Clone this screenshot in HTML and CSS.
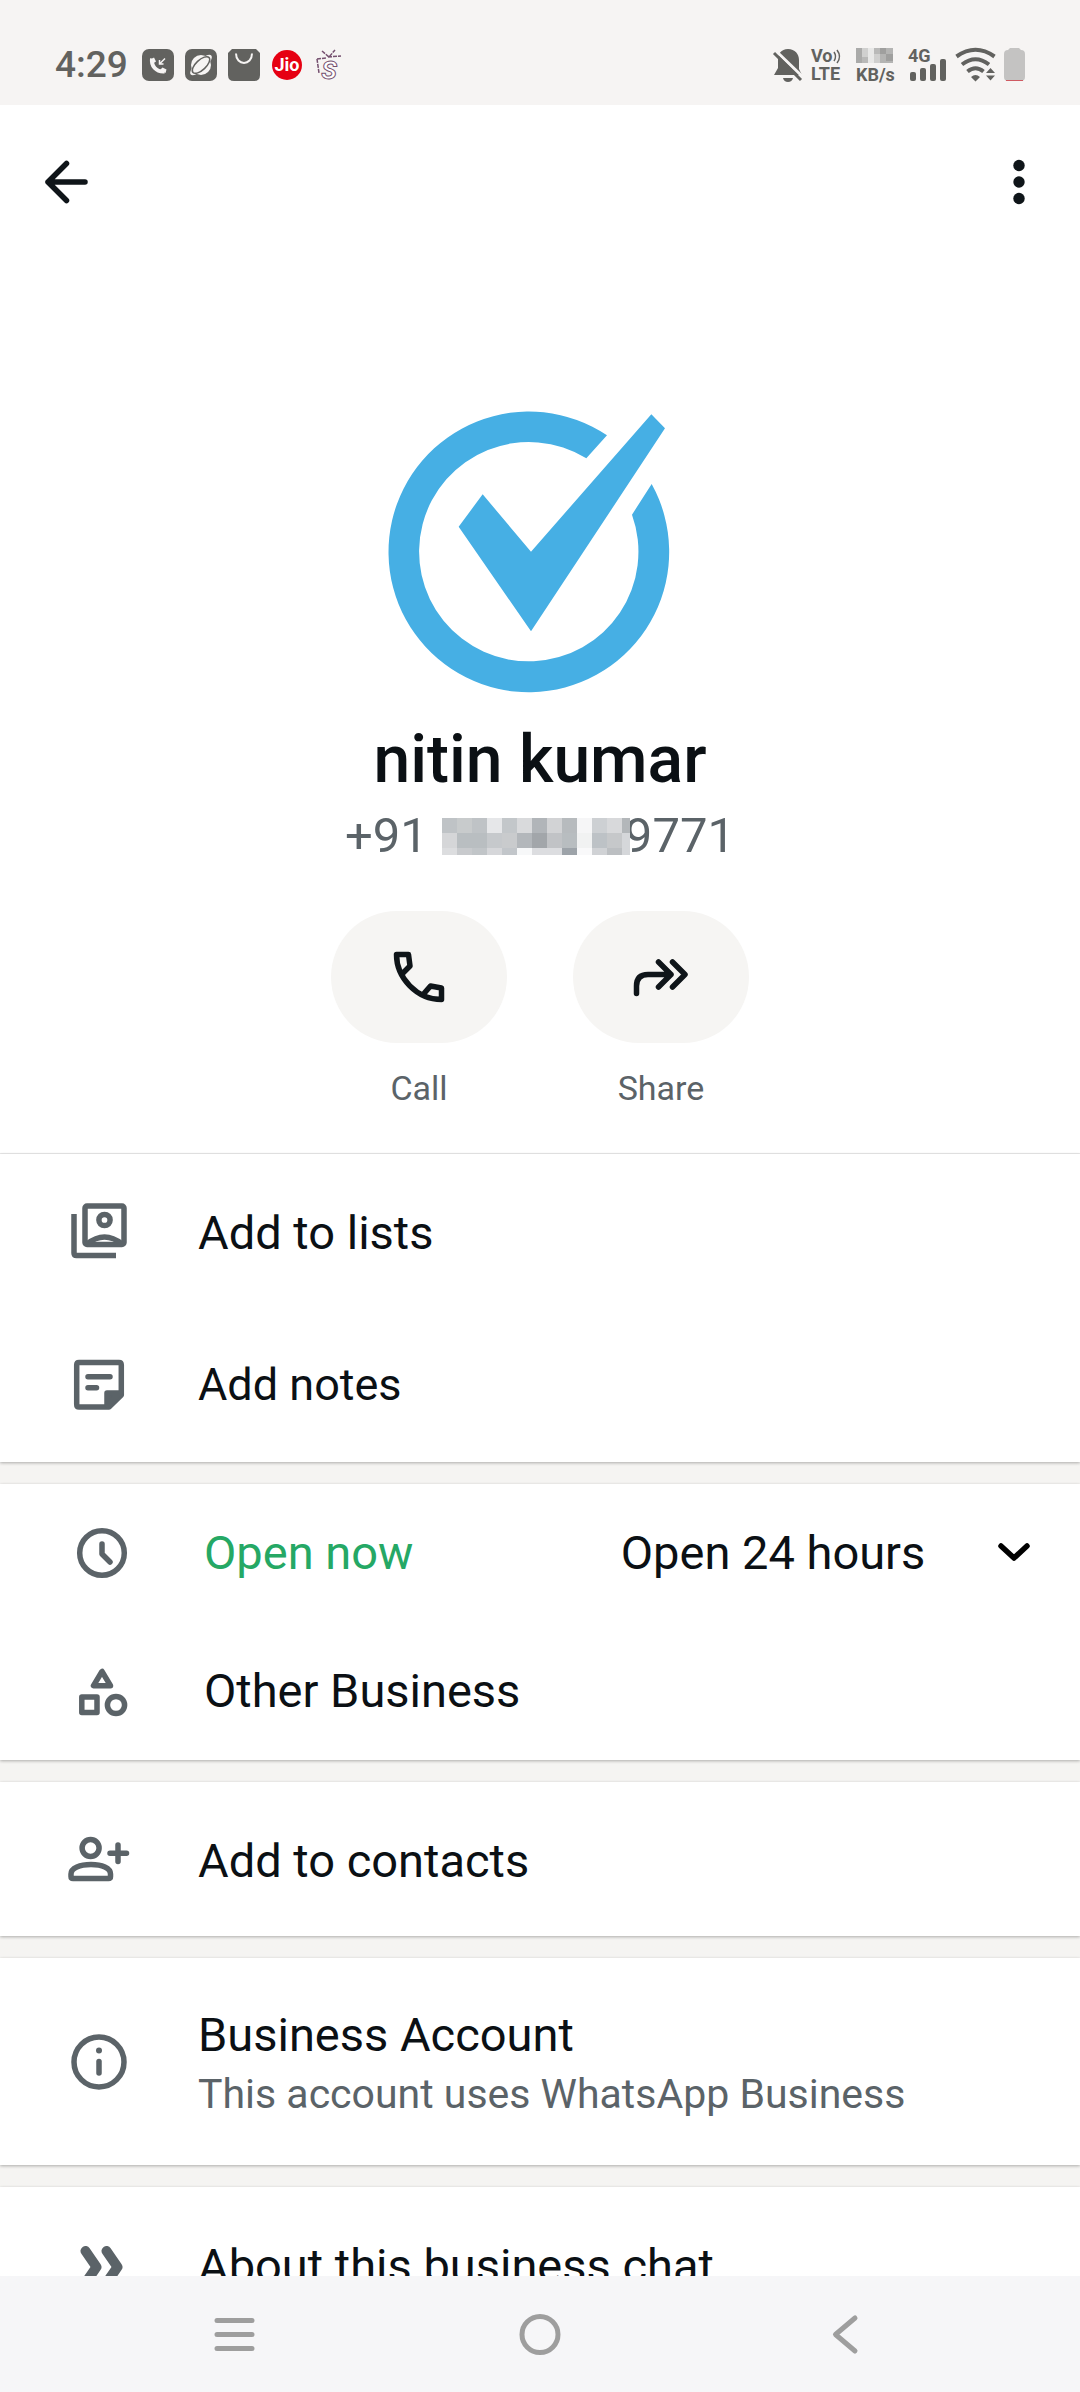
FILE: index.html
```html
<!DOCTYPE html>
<html lang="en">
<head>
  <meta charset="UTF-8">
  <meta name="viewport" content="width=device-width, initial-scale=1.0">
  <link rel="stylesheet" href="styles.css">
  <title>nitin kumar</title>
</head>
<body>
  <div class="status-bar">
    <div class="status-left">
      <span class="time">4:29</span>
      <svg width="32" height="32" viewBox="0 0 32 32">
        <rect width="32" height="32" rx="7" fill="#62625f"/>
        <path d="M10 9.500C9 17 14 23 22.500 22.500" fill="none" stroke="#f6f4f3" stroke-width="4"/>
        <path d="M8 11l4-2.500 2 4-3 2zM18 21l2.500-2.500 4 2-1 3.500z" fill="#f6f4f3"/>
        <path d="M23 9.500L17.500 15M17.500 11V15H21.500" fill="none" stroke="#f6f4f3" stroke-width="1.500"/>
      </svg>
      <svg width="32" height="32" viewBox="0 0 32 32">
        <rect width="32" height="32" rx="7" fill="#62625f"/>
        <circle cx="16" cy="16" r="10" fill="#f6f4f3"/>
        <ellipse cx="16" cy="16" rx="14" ry="5" transform="rotate(-43 16 16)" fill="#f6f4f3"/>
        <ellipse cx="16" cy="16" rx="11" ry="5" transform="rotate(-43 16 16)" fill="#f6f4f3" stroke="#62625f" stroke-width="1.500"/>
      </svg>
      <svg width="32" height="32" viewBox="0 0 32 32">
        <path d="M4 0H28L32 4V26Q32 32 26 32H6Q0 32 0 26V4Z" fill="#62625f"/>
        <path d="M8 4.500C8 17 24 17 24 4.500" fill="none" stroke="#f6f4f3" stroke-width="2"/>
      </svg>
      <svg width="32" height="32" viewBox="0 0 32 32">
        <circle cx="16" cy="16" r="15" fill="#e60012"/>
        <text x="16" y="22" class="jio">Jio</text>
      </svg>
      <svg width="32" height="32" viewBox="0 0 32 32">
        <path d="M8 2L15 8L21 1M14 8L27 7M3 10L12 9M3 10L5 24" fill="none" stroke="#75506f" stroke-width="1.500" stroke-dasharray="4 1"/>
        <text x="15" y="30" class="tv">S</text>
      </svg>
    </div>
    <div class="status-right">
      <svg width="30" height="36" viewBox="0 0 30 36">
        <path d="M15 2C8 2 5 7 5 13V21L1 28H29L26 22V13C26 7 22 2 15 2Z" fill="#62625f"/>
        <path d="M10 31H20Q19 35 15 35T10 31Z" fill="#62625f"/>
        <path d="M3 4L31 31" stroke="#f6f4f3" stroke-width="3"/>
        <path d="M1 6L28 33" stroke="#62625f" stroke-width="3"/>
      </svg>
      <svg width="30" height="36" viewBox="0 0 30 36">
        <text x="0" y="15" class="tiny">Vo</text>
        <path d="M23 5Q26 9.500 23 14M26 3Q31 9.500 26 16" fill="none" stroke="#62625f" stroke-width="1.500"/>
        <text x="0" y="33" class="tiny">LTE</text>
      </svg>
      <svg class="speed" width="37" height="36" viewBox="0 0 37 36">
        <g shape-rendering="crispEdges">
          <path fill="#aaaaa9" d="M0 1h6v6h-6zM0 7h6v9h-6z"/>
          <path fill="#d0d0cf" d="M6 1h6v9h-6z"/>
          <path fill="#b9b9b8" d="M6 10h6v6h-6zM18 1h6v6h-6z"/>
          <path fill="#e8e8e7" d="M12 1h6v15h-6z"/>
          <path fill="#cfcfce" d="M18 7h6v9h-6z"/>
          <path fill="#9f9f9e" d="M24 1h6v6h-6zM30 7h7v7h-7z"/>
          <path fill="#b4b4b3" d="M24 7h6v9h-6zM30 1h7v6h-7zM30 14h7v2h-7z"/>
        </g>
        <text x="0" y="34" class="tiny">KB/s</text>
      </svg>
      <svg width="39" height="36" viewBox="0 0 39 36">
        <text x="0" y="15" class="tiny">4G</text>
        <g fill="#62625f">
          <rect x="2" y="25" width="6" height="9" rx="2"/>
          <rect x="12" y="21" width="6" height="13" rx="2"/>
          <rect x="22" y="17" width="6" height="17" rx="2"/>
          <rect x="32" y="12" width="6" height="22" rx="2"/>
        </g>
      </svg>
      <svg width="41" height="36" viewBox="0 0 41 36">
        <path d="M1.500 9.500Q20.500 -4 39.500 9.500M7 17.500Q20.500 7 34 17.500M12.500 24.500Q20.500 18 28.500 24.500" fill="none" stroke="#62625f" stroke-width="4"/>
        <path d="M16 30Q20.500 26 25 30L20.500 34.500ZM31 26L35.500 21L40 26ZM31 28.500H40L35.500 33.500Z" fill="#62625f"/>
      </svg>
      <svg width="21" height="36" viewBox="0 0 21 36">
        <path d="M4 3L6 1H15L17 3Q21 3 21 7V30Q21 34 17 34H4Q0 34 0 30V7Q0 3 4 3Z" fill="#c4c3c2"/>
        <path d="M2 33.500H19" stroke="#cf5a62" stroke-width="1"/>
      </svg>
    </div>
  </div>

  <main>
    <header class="app-bar">
      <button class="icon-btn" aria-label="Back">
        <svg class="stroke dark" viewBox="0 0 72 72"><path d="M55 36H18M36.500 17.500L18 36L36.500 54.500"/></svg>
      </button>
      <button class="icon-btn" aria-label="More options">
        <svg viewBox="0 0 72 72" fill="#0f1519"><circle cx="36" cy="19.500" r="5.700"/><circle cx="36" cy="36" r="5.700"/><circle cx="36" cy="52.500" r="5.700"/></svg>
      </button>
    </header>

    <section class="profile">
      <svg class="photo" viewBox="0 0 1020 960" fill="#46afe4">
        <path d="M711 136A421 421 0 1 0 845 282L786 374A329 329 0 1 1 649 205Z"/>
        <path d="M338 313L483 485L844 73L885 115L483 724L266 410Z"/>
      </svg>
      <h1>nitin kumar</h1>
      <p class="phone">
        <span>+91</span>
        <svg class="blur-strip" width="188" height="37" viewBox="0 0 188 37" shape-rendering="crispEdges">
          <rect x="0" y="0" width="15" height="15" fill="#bfc3c6"/><rect x="15" y="0" width="15" height="15" fill="#c8cbcc"/><rect x="30" y="0" width="15" height="15" fill="#bfc3c6"/><rect x="45" y="0" width="15" height="15" fill="#e6e7e9"/><rect x="60" y="0" width="15" height="15" fill="#c3c7ca"/><rect x="75" y="0" width="15" height="15" fill="#d9dadc"/><rect x="90" y="0" width="15" height="15" fill="#b1b5b9"/><rect x="105" y="0" width="15" height="15" fill="#d2d3d5"/><rect x="120" y="0" width="15" height="15" fill="#b7bbbe"/><rect x="135" y="0" width="15" height="15" fill="#f6f6f7"/><rect x="150" y="0" width="15" height="15" fill="#cdd0d3"/><rect x="165" y="0" width="15" height="15" fill="#d8d9db"/><rect x="180" y="0" width="8" height="15" fill="#b3b7ba"/>
          <rect x="0" y="15" width="15" height="15" fill="#d5d6d8"/><rect x="15" y="15" width="30" height="15" fill="#b9bec1"/><rect x="45" y="15" width="15" height="15" fill="#c6c9cc"/><rect x="60" y="15" width="15" height="15" fill="#c9cbcd"/><rect x="75" y="15" width="15" height="15" fill="#b3b7bb"/><rect x="90" y="15" width="15" height="15" fill="#a2a6aa"/><rect x="105" y="15" width="15" height="15" fill="#c1c3c6"/><rect x="120" y="15" width="15" height="15" fill="#b8bdc0"/><rect x="135" y="15" width="15" height="15" fill="#f1f2f2"/><rect x="150" y="15" width="15" height="15" fill="#bdc2c6"/><rect x="165" y="15" width="15" height="15" fill="#c6c8ca"/><rect x="180" y="15" width="8" height="15" fill="#d5d7da"/>
          <rect x="0" y="30" width="15" height="7" fill="#dcdddf"/><rect x="15" y="30" width="15" height="7" fill="#c8cacd"/><rect x="30" y="30" width="15" height="7" fill="#c1c5c8"/><rect x="45" y="30" width="15" height="7" fill="#d6d7da"/><rect x="60" y="30" width="15" height="7" fill="#c2c6ca"/><rect x="75" y="30" width="15" height="7" fill="#f7f8f9"/><rect x="90" y="30" width="30" height="7" fill="#dcdde0"/><rect x="120" y="30" width="15" height="7" fill="#9da3a9"/><rect x="135" y="30" width="15" height="7" fill="#f9f9fa"/><rect x="150" y="30" width="15" height="7" fill="#d0d2d5"/><rect x="165" y="30" width="15" height="7" fill="#bcbfc2"/><rect x="180" y="30" width="8" height="7" fill="#d5d7da"/>
        </svg>
        <span>9771</span>
      </p>
      <div class="actions">
        <button class="action">
          <span class="pill">
            <svg class="stroke dark" viewBox="0 0 72 72"><path d="M13.500 13.500H25.500L27 25L20 32M13.500 13.500C13.500 37 34 58.500 58.500 58.500V47L47.500 45L41 52.500"/></svg>
          </span>
          Call
        </button>
        <button class="action">
          <span class="pill">
            <svg class="stroke dark" viewBox="0 0 72 72"><path d="M11.500 52.500V45Q11.500 33.500 23 33.500H46M33.500 21L46 33.500L33.500 46M47.500 21L60 33.500L47.500 46"/></svg>
          </span>
          Share
        </button>
      </div>
    </section>

    <section class="card">
      <button class="row">
        <svg class="stroke grey" viewBox="0 0 72 72"><path stroke-linecap="butt" d="M11 19V58Q11 60.500 13.500 60.500H53"/><rect x="22" y="11" width="39" height="38.500" rx="2"/><circle cx="41.500" cy="25" r="5.600"/><path stroke-linecap="butt" d="M24 49Q41.500 35 59 49"/></svg>
        <span class="text">Add to lists</span>
      </button>
      <button class="row">
        <svg class="stroke grey" viewBox="0 0 72 72"><path d="M16 13.500H56Q58.300 13.500 58.300 16V46L46 58H16Q13.700 58 13.700 55.500V16Q13.700 13.500 16 13.500ZM25 27.700H47M25 38.700H33.500"/><path d="M44 56V44H57Z" fill="#5b6368"/></svg>
        <span class="text small">Add notes</span>
      </button>
    </section>

    <section class="card business">
      <button class="row">
        <svg class="stroke grey" viewBox="0 0 72 72"><circle cx="36" cy="36" r="22.300"/><path d="M36 27V37L44 45"/></svg>
        <span class="text open">Open now</span>
        <span class="text hours">Open 24 hours</span>
        <svg class="stroke chevron" viewBox="0 0 72 72"><path d="M23 29L36 41L49 29"/></svg>
      </button>
      <button class="row">
        <svg class="stroke grey" viewBox="0 0 72 72"><path d="M36 16.500L27.500 30.700H44.500Z"/><rect x="15.800" y="42" width="15.200" height="15.400"/><circle cx="50" cy="50" r="8.600"/></svg>
        <span class="text">Other Business</span>
      </button>
    </section>

    <section class="card">
      <button class="row">
        <svg class="stroke grey" viewBox="0 0 72 72"><circle cx="27.600" cy="25" r="8.500"/><path d="M8 51C8 45 17 41.500 28 41.500S47.500 45 47.500 51V53.500Q47.500 55.500 45.500 55.500H10Q8 55.500 8 53.500ZM47 30.300H63.500M55 22V38.500"/></svg>
        <span class="text">Add to contacts</span>
      </button>
    </section>

    <section class="card">
      <button class="row tall">
        <svg class="stroke grey" viewBox="0 0 72 72"><circle cx="36" cy="36" r="25"/><path d="M36 35.500V47"/><circle cx="36" cy="24.500" r="3" fill="#5b6368" stroke="none"/></svg>
        <span class="text">Business Account
          <small>This account uses WhatsApp Business</small>
        </span>
      </button>
    </section>

    <section class="card">
      <button class="row">
        <svg class="stroke grey thick" viewBox="0 0 72 72"><path d="M22.500 23L33.500 39L22.500 55M43.500 23L54.500 39L43.500 55"/></svg>
        <span class="text">About this business chat</span>
      </button>
    </section>
  </main>

  <nav class="nav-bar">
    <button aria-label="Recent apps">
      <svg class="stroke nav" viewBox="0 0 72 72"><path d="M18 22.500H53M18 36.500H53M18 50.500H53"/></svg>
    </button>
    <button aria-label="Home">
      <svg class="stroke nav" viewBox="0 0 72 72"><circle cx="36" cy="36.500" r="18"/></svg>
    </button>
    <button aria-label="Back">
      <svg class="stroke nav" viewBox="0 0 72 72"><path d="M46 20L26.500 36.500L46 53"/></svg>
    </button>
  </nav>
</body>
</html>
```
FILE: styles.css
```css
* {
  box-sizing: border-box;
}

body {
  margin: 0;
  height: 100vh;
  display: flex;
  flex-direction: column;
  overflow: hidden;
  font-family: Roboto, "Liberation Sans", sans-serif;
  color: #0b1014;
  background: #f5f4f2;
}

button {
  border: none;
  padding: 0;
  background: none;
  font: inherit;
  color: inherit;
  cursor: pointer;
}

svg {
  display: block;
  flex: none;
  overflow: visible;
}

/* status bar */
.status-bar {
  flex: none;
  height: 105px;
  padding: 24px 55px 0;
  display: flex;
  justify-content: space-between;
  align-items: center;
  background: #f6f4f3;
}

.status-left,
.status-right {
  display: flex;
  align-items: center;
}

.status-left {
  gap: 11px;
}

.status-right {
  gap: 8px;
}

.time {
  margin-right: 3px;
  font-size: 37px;
  font-weight: 500;
  color: #62625f;
}

.speed {
  margin: 0 7px;
}

.tiny {
  font-size: 18px;
  font-weight: 700;
  fill: #62625f;
}

.jio {
  font-size: 18px;
  font-weight: 700;
  text-anchor: middle;
  fill: #fff;
}

.tv {
  font-size: 26px;
  font-weight: 700;
  font-style: italic;
  text-anchor: middle;
  fill: #fff;
  stroke: #75506f;
  stroke-width: 1px;
}

/* icons */
.stroke {
  fill: none;
  stroke-width: 5.5px;
  stroke-linecap: round;
  stroke-linejoin: round;
}

.dark {
  stroke: #0f1519;
}

.grey {
  stroke: #5b6368;
}

.chevron {
  stroke: #000;
}

.thick {
  stroke-width: 10px;
}

.nav {
  stroke: #9e9e9e;
  stroke-width: 5px;
}

.icon-btn svg,
.pill svg,
.row svg,
.nav-bar svg {
  width: 72px;
  height: 72px;
}

/* content */
main {
  flex: 1;
  min-height: 0;
  overflow: hidden;
}

.app-bar {
  height: 154px;
  padding: 0 25px 0 30px;
  display: flex;
  justify-content: space-between;
  align-items: center;
  background: #fff;
}

.profile {
  padding: 131px 0 45px;
  display: flex;
  flex-direction: column;
  align-items: center;
  background: #fff;
  border-bottom: 1px solid #ebebeb;
}

.photo {
  width: 340px;
  height: 320px;
}

.profile h1 {
  margin: 8px 0 0;
  font-size: 66px;
  line-height: 84px;
  font-weight: 500;
}

.phone {
  margin: 0;
  display: flex;
  align-items: center;
  font-size: 49px;
  line-height: 68px;
  color: #5b6368;
}

.blur-strip {
  z-index: 1;
  margin: 0 -5px 0 14px;
}

.actions {
  margin-top: 41px;
  display: flex;
  gap: 66px;
}

.action {
  display: flex;
  flex-direction: column;
  align-items: center;
  gap: 25px;
  font-size: 34px;
  line-height: 40px;
  color: #5b6368;
}

.pill {
  width: 176px;
  height: 132px;
  border-radius: 66px;
  display: flex;
  justify-content: center;
  align-items: center;
  background: #f6f5f3;
}

.card {
  margin-bottom: 22px;
  background: #fff;
  box-shadow: 0 1px 3px rgba(0, 0, 0, 0.3);
}

.row {
  width: 100%;
  height: 154px;
  padding: 0 30px 0 63px;
  display: flex;
  align-items: center;
  gap: 63px;
  text-align: left;
}

.row.tall {
  height: 207px;
}

.text {
  padding-top: 4px;
  font-size: 47px;
  line-height: 60px;
}

.text.small {
  padding-top: 0;
  font-size: 45px;
}

.text small {
  display: block;
  font-size: 41px;
  line-height: 58px;
  color: #5b6368;
}

.business .row {
  height: 138px;
  padding-left: 66px;
  gap: 66px;
}

.business .text {
  padding-top: 0;
}

.business .open {
  flex: 7;
  color: #25a865;
}

.business .hours {
  flex: 6;
  margin: 0 -66px;
}

/* bottom navigation */
.nav-bar {
  flex: none;
  height: 116px;
  padding: 0 82px;
  display: grid;
  grid-template-columns: repeat(3, 1fr);
  background: #f6f6f8;
}

.nav-bar button {
  display: flex;
  justify-content: center;
  align-items: center;
}
```
